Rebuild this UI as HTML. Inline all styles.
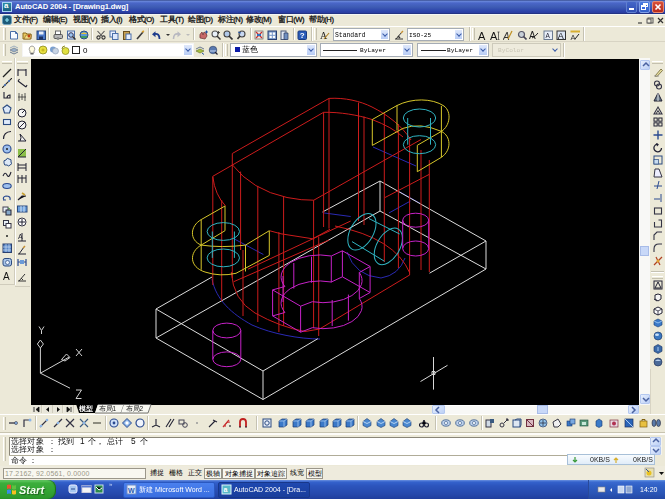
<!DOCTYPE html><html><head><meta charset="utf-8"><style>
*{box-sizing:border-box}
html,body{margin:0;padding:0}
body{width:665px;height:499px;overflow:hidden;position:relative;background:#ece9d8;font-family:"Liberation Sans",sans-serif;font-size:8px;color:#000}
.a{position:absolute;display:block}
div.a{white-space:nowrap}
.grip{position:absolute;width:3px;border-left:1px solid #fff;border-right:1px solid #c4c0ae}
.hgrip{position:absolute;height:3px;border-top:1px solid #fff;border-bottom:1px solid #c4c0ae}
.sep{position:absolute;width:2px;border-left:1px solid #c5c2b2;border-right:1px solid #fff}
.hsep{position:absolute;height:2px;border-top:1px solid #c5c2b2;border-bottom:1px solid #fff}
.combo{position:absolute;background:#fff;border:1px solid #a5acb5}
.dd{position:absolute;right:0;top:0;width:9px;bottom:0;background:linear-gradient(#dfe8fb,#b9cdf5);border:1px solid #fff}
.dd:after{content:"";position:absolute;left:2px;top:2px;width:3px;height:3px;border-right:1.3px solid #3a5ca8;border-bottom:1.3px solid #3a5ca8;transform:rotate(45deg)}
.ct{position:absolute;font-family:"Liberation Mono",monospace;font-size:8px;white-space:pre;color:#000;line-height:8px}
.sb{position:absolute;top:468px;height:11px;font-size:7px;line-height:9px;white-space:nowrap;text-align:center;color:#000}
.sbp{border:1px solid #9a968a;background:#f8f7f0}
</style></head><body><div id="root" style="position:absolute;left:0;top:0;width:665px;height:499px;overflow:hidden;filter:blur(0.3px)">
<div class="a" style="left:0;top:0;width:665px;height:14px;background:linear-gradient(#3a5090 0px,#6482d8 1.5px,#4a66c8 3px,#3e5cb4 7px,#2c44aa 11px,#2a3ca0 13px,#1a2868 14px)"></div>
<div class="a" style="left:2px;top:2px;width:10px;height:10px;background:linear-gradient(#2a8aa0,#1a6080);border:1px solid #a8d4f4"></div>
<div class="a" style="left:4px;top:2px;color:#fff;font-size:8px;line-height:8px;font-weight:bold">a</div>
<div class="a" style="left:15px;top:2px;color:#fff;font-weight:bold;font-size:7.6px;line-height:10px;letter-spacing:-0.1px">AutoCAD 2004 - [Drawing1.dwg]</div>
<div class="a" style="left:626px;top:1px;width:11px;height:12px;background:linear-gradient(#4466c8,#2f4fb4);border:1px solid #6080d0;border-radius:2px"></div>
<div class="a" style="left:629px;top:8px;width:5px;height:2px;background:#fff"></div>
<div class="a" style="left:639px;top:1px;width:11px;height:12px;background:linear-gradient(#4a7ae0,#3460c8);border:1px solid #80a0e8;border-radius:2px"></div>
<div class="a" style="left:643px;top:3px;width:5px;height:4px;border:1px solid #fff;border-top-width:2px"></div>
<div class="a" style="left:641px;top:5px;width:5px;height:5px;border:1px solid #fff;border-top-width:2px;background:#3a6ae0"></div>
<div class="a" style="left:652px;top:1px;width:12px;height:12px;background:linear-gradient(#d8503a,#b82a1c);border:1px solid #e88a70;border-radius:2px"></div>
<svg class="a" style="left:654px;top:3px" width="8" height="8" viewBox="0 0 8 8" ><path d="M1.5 1.5l5 5M6.5 1.5l-5 5" stroke="#fff" stroke-width="1.6"/></svg>
<div class="a" style="left:0;top:14px;width:665px;height:12px;background:#ece9d8;border-top:1px solid #f4f6f4"></div>
<svg class="a" style="left:2px;top:15px" width="11" height="10" viewBox="0 0 11 10" ><rect x=".5" y=".5" width="9" height="9" rx="2" fill="#1c5a78" stroke="#6aa0c0" stroke-width=".8"/><path d="M3 5h4M5 3v4" stroke="#8ae0f0" stroke-width="1.2"/></svg>
<div class="a" style="left:14px;top:15px;font-size:7.6px;line-height:10px;letter-spacing:-0.4px;-webkit-text-stroke:0.3px #222">文件(F)</div>
<div class="a" style="left:43px;top:15px;font-size:7.6px;line-height:10px;letter-spacing:-0.4px;-webkit-text-stroke:0.3px #222">编辑(E)</div>
<div class="a" style="left:73px;top:15px;font-size:7.6px;line-height:10px;letter-spacing:-0.4px;-webkit-text-stroke:0.3px #222">视图(V)</div>
<div class="a" style="left:101px;top:15px;font-size:7.6px;line-height:10px;letter-spacing:-0.4px;-webkit-text-stroke:0.3px #222">插入(I)</div>
<div class="a" style="left:129px;top:15px;font-size:7.6px;line-height:10px;letter-spacing:-0.4px;-webkit-text-stroke:0.3px #222">格式(O)</div>
<div class="a" style="left:160px;top:15px;font-size:7.6px;line-height:10px;letter-spacing:-0.4px;-webkit-text-stroke:0.3px #222">工具(T)</div>
<div class="a" style="left:188px;top:15px;font-size:7.6px;line-height:10px;letter-spacing:-0.4px;-webkit-text-stroke:0.3px #222">绘图(D)</div>
<div class="a" style="left:218px;top:15px;font-size:7.6px;line-height:10px;letter-spacing:-0.4px;-webkit-text-stroke:0.3px #222">标注(N)</div>
<div class="a" style="left:246px;top:15px;font-size:7.6px;line-height:10px;letter-spacing:-0.4px;-webkit-text-stroke:0.3px #222">修改(M)</div>
<div class="a" style="left:278px;top:15px;font-size:7.6px;line-height:10px;letter-spacing:-0.4px;-webkit-text-stroke:0.3px #222">窗口(W)</div>
<div class="a" style="left:309px;top:15px;font-size:7.6px;line-height:10px;letter-spacing:-0.4px;-webkit-text-stroke:0.3px #222">帮助(H)</div>
<svg class="a" style="left:635px;top:16px" width="30" height="9" viewBox="0 0 30 9" ><path d="M3 7h4" stroke="#444" stroke-width="1.2"/><rect x="13" y="2" width="5" height="5" fill="none" stroke="#555"/><rect x="12" y="3" width="4" height="4" fill="#eeebdd" stroke="#555"/><path d="M23 2l5 5M28 2l-5 5" stroke="#333" stroke-width="1.2"/></svg>
<div class="a" style="left:0;top:26px;width:665px;height:1px;background:#fff"></div>
<div class="a" style="left:0;top:41px;width:665px;height:1px;background:#d8d4c4"></div>
<div class="grip" style="left:3px;top:28px;height:12px"></div>
<svg class="a" style="left:9px;top:30px" width="10" height="10" viewBox="0 0 10 10" ><path d="M1.5 1.5h5l2 2v5.5h-7z" fill="#f8fbff" stroke="#4a6fa8" stroke-width="1"/><path d="M6.5 1.5v2h2" fill="none" stroke="#4a6fa8"/></svg><svg class="a" style="left:22px;top:30px" width="10" height="10" viewBox="0 0 10 10" ><path d="M1 3h3l1 1h4v5h-8z" fill="#e8c860" stroke="#8a6a20"/><path d="M2 9l2-4h6l-2 4z" fill="#f4dc88" stroke="#8a6a20" stroke-width=".7"/><circle cx="7" cy="6" r="1.5" fill="#c04010"/></svg><svg class="a" style="left:36px;top:30px" width="10" height="10" viewBox="0 0 10 10" ><rect x="1" y="1" width="8.5" height="8.5" fill="#4a78c8" stroke="#23427a"/><rect x="3" y="1.5" width="4.5" height="3" fill="#e8eef8"/><rect x="3" y="6.5" width="4" height="3" fill="#1a3060"/></svg><svg class="a" style="left:53px;top:30px" width="10" height="10" viewBox="0 0 10 10" ><rect x="2.5" y="1" width="5" height="4" fill="#fff" stroke="#666"/><rect x="1" y="4.5" width="8.5" height="4" rx="1" fill="#b8b8b8" stroke="#555"/><circle cx="5" cy="8.5" r="1.5" fill="#888"/></svg><svg class="a" style="left:66px;top:30px" width="10" height="10" viewBox="0 0 10 10" ><rect x="1.5" y="1" width="7" height="8" fill="#e8f0ff" stroke="#4a6fa8"/><circle cx="5" cy="5" r="2.3" fill="#9cc4f0" stroke="#335"/><path d="M6.5 6.5l3 3" stroke="#333" stroke-width="1.5"/></svg><svg class="a" style="left:79px;top:30px" width="10" height="10" viewBox="0 0 10 10" ><circle cx="5" cy="5" r="4" fill="#5c9ad8" stroke="#2a4a80"/><path d="M1.5 4q3.5-3 7 0" fill="#f0c030"/><path d="M2 7h6" stroke="#3a9a3a" stroke-width="1.5"/></svg><svg class="a" style="left:96px;top:30px" width="10" height="10" viewBox="0 0 10 10" ><circle cx="2.5" cy="7.5" r="1.6" fill="none" stroke="#333" stroke-width="1.1"/><circle cx="7.5" cy="7.5" r="1.6" fill="none" stroke="#333" stroke-width="1.1"/><path d="M3.5 6.5l5-5.5M6.5 6.5l-5-5.5" stroke="#555" stroke-width="1.1"/></svg><svg class="a" style="left:109px;top:30px" width="10" height="10" viewBox="0 0 10 10" ><rect x="1" y="1" width="5.5" height="6" fill="#e8f0ff" stroke="#4a6fa8"/><rect x="3.5" y="3.5" width="5.5" height="6" fill="#dce8fc" stroke="#4a6fa8"/></svg><svg class="a" style="left:122px;top:30px" width="10" height="10" viewBox="0 0 10 10" ><rect x="1.5" y="1.5" width="6" height="8" fill="#c8a050" stroke="#6a5020"/><rect x="4" y="4" width="5" height="5.5" fill="#e8f0ff" stroke="#4a6fa8"/></svg><svg class="a" style="left:135px;top:30px" width="10" height="10" viewBox="0 0 10 10" ><path d="M2 9l6-7" stroke="#3a3a3a" stroke-width="1.6"/><path d="M7 2l2-1" stroke="#d8a030" stroke-width="1.5"/></svg><svg class="a" style="left:151px;top:30px" width="10" height="10" viewBox="0 0 10 10" ><path d="M8.5 9q0-6-5-5" fill="none" stroke="#1e3c8c" stroke-width="1.8"/><path d="M1 4.2l3.5-3v6z" fill="#1e3c8c"/></svg><svg class="a" style="left:172px;top:30px" width="10" height="10" viewBox="0 0 10 10" ><path d="M1.5 9q0-6 5-5" fill="none" stroke="#b8b8c0" stroke-width="1.6"/><path d="M9 4.2l-3.5-3v6z" fill="#b8b8c0"/></svg><svg class="a" style="left:198px;top:30px" width="10" height="10" viewBox="0 0 10 10" ><path d="M2 8q-1-4 2-6l1 3 1-3q3 1 3 4l-2 3z" fill="#c86868" stroke="#6a3030" stroke-width=".7"/><path d="M7 2h3M8.5 .5v3" stroke="#2050a0" stroke-width="1"/></svg><svg class="a" style="left:211px;top:30px" width="10" height="10" viewBox="0 0 10 10" ><circle cx="4" cy="4" r="3" fill="#e8f0f8" stroke="#555" stroke-width="1.1"/><path d="M6 6l3.5 3.5" stroke="#333" stroke-width="1.5"/><path d="M7.5 1v3M6 2.5h3" stroke="#333" stroke-width=".8"/></svg><svg class="a" style="left:223px;top:30px" width="10" height="10" viewBox="0 0 10 10" ><circle cx="4" cy="4" r="3" fill="#b0c8e8" stroke="#444" stroke-width="1.1"/><path d="M6 6l3.5 3.5" stroke="#333" stroke-width="1.7"/></svg><svg class="a" style="left:237px;top:30px" width="10" height="10" viewBox="0 0 10 10" ><circle cx="5" cy="4" r="3" fill="#c8d8f0" stroke="#444" stroke-width="1.1"/><path d="M3 6l-2.5 3" stroke="#333" stroke-width="1.6"/><path d="M1 2l3 1" stroke="#2050a0"/></svg><svg class="a" style="left:254px;top:30px" width="10" height="10" viewBox="0 0 10 10" ><rect x="1" y="1" width="8" height="8" fill="#f0e8e0" stroke="#666" stroke-width=".7"/><path d="M2 2l6 6M8 2l-6 6" stroke="#c83030" stroke-width="1.2"/><rect x="3" y="4" width="4" height="2" fill="#3070c0"/></svg><svg class="a" style="left:267px;top:30px" width="10" height="10" viewBox="0 0 10 10" ><rect x="1" y="1" width="8.5" height="8.5" fill="#7898c8" stroke="#2a4070"/><rect x="2.5" y="2.5" width="2.3" height="2.3" fill="#fff"/><rect x="5.8" y="2.5" width="2.3" height="2.3" fill="#fff"/><rect x="2.5" y="5.8" width="2.3" height="2.3" fill="#fff"/><rect x="5.8" y="5.8" width="2.3" height="2.3" fill="#fff"/></svg><svg class="a" style="left:280px;top:30px" width="10" height="10" viewBox="0 0 10 10" ><rect x="1" y="1" width="5" height="8.5" fill="#e0e8f4" stroke="#4a5a78"/><path d="M4 3h4v6.5h-4z" fill="#7090c0" stroke="#2a3a60" stroke-width=".7"/></svg><svg class="a" style="left:297px;top:30px" width="10" height="10" viewBox="0 0 10 10" ><rect x="1" y="1" width="8.5" height="8.5" rx="1" fill="#2a5cb8" stroke="#1a3a80"/><text x="5.2" y="8.3" font-size="8" font-weight="bold" fill="#fff" text-anchor="middle" font-family="Liberation Sans">?</text></svg>
<svg class="a" style="left:163px;top:30px" width="10" height="10" viewBox="0 0 10 10" ><path d="M3 4h4l-2 2z" fill="#333"/></svg>
<svg class="a" style="left:183px;top:30px" width="10" height="10" viewBox="0 0 10 10" ><path d="M3 4h4l-2 2z" fill="#bbb"/></svg>
<div class="sep" style="left:48px;top:28px;height:12px"></div>
<div class="sep" style="left:91px;top:28px;height:12px"></div>
<div class="sep" style="left:148px;top:28px;height:12px"></div>
<div class="sep" style="left:193px;top:28px;height:12px"></div>
<div class="sep" style="left:250px;top:28px;height:12px"></div>
<div class="sep" style="left:293px;top:28px;height:12px"></div>
<div class="sep" style="left:311px;top:27px;height:14px"></div>
<div class="grip" style="left:314px;top:28px;height:12px"></div>
<svg class="a" style="left:320px;top:30px" width="11" height="10" viewBox="0 0 11 10" ><text x="0" y="9" font-size="10" font-family="Liberation Serif" fill="#222">A</text><path d="M4 9l5-6" stroke="#b08020" stroke-width="1.1"/></svg>
<div class="combo" style="left:333px;top:28px;width:57px;height:13px"><div class="dd"></div></div>
<div class="a" style="left:335px;top:31px;font-family:'Liberation Mono',monospace;font-size:6.4px;line-height:9px">Standard</div>
<svg class="a" style="left:394px;top:30px" width="11" height="10" viewBox="0 0 11 10" ><path d="M1 9h8M2 9l6-7" stroke="#333" stroke-width="1"/><path d="M4 6l2 2" stroke="#333" stroke-width="1.5"/><path d="M7 3l2-2" stroke="#c89030" stroke-width="1.2"/></svg>
<div class="combo" style="left:407px;top:28px;width:57px;height:13px"><div class="dd"></div></div>
<div class="a" style="left:409px;top:31px;font-family:'Liberation Mono',monospace;font-size:6.2px;line-height:9px">ISO-25</div>
<div class="sep" style="left:469px;top:27px;height:14px"></div>
<div class="grip" style="left:472px;top:28px;height:12px"></div>
<svg class="a" style="left:477px;top:30px" width="10" height="10" viewBox="0 0 10 10" ><text x="1" y="9.5" font-size="11" font-family="Liberation Sans" fill="#111">A</text></svg><svg class="a" style="left:490px;top:30px" width="10" height="10" viewBox="0 0 10 10" ><text x="0" y="9.5" font-size="11" font-family="Liberation Sans" fill="#111">A</text><path d="M8.5 2v7.5M7.5 2h2M7.5 9.5h2" stroke="#333" stroke-width=".7"/></svg><svg class="a" style="left:503px;top:30px" width="10" height="10" viewBox="0 0 10 10" ><text x="0" y="9.5" font-size="10" font-style="italic" font-family="Liberation Sans" fill="#333">A</text><path d="M5 9l4-8" stroke="#c09020" stroke-width="1.2"/></svg><svg class="a" style="left:517px;top:30px" width="10" height="10" viewBox="0 0 10 10" ><circle cx="4.5" cy="4.5" r="3" fill="#c8d0d8" stroke="#556" stroke-width="1.2"/><path d="M6.5 6.5l3 3" stroke="#445" stroke-width="1.6"/></svg><svg class="a" style="left:529px;top:30px" width="10" height="10" viewBox="0 0 10 10" ><text x="0" y="9" font-size="10" font-family="Liberation Sans" fill="#222">A</text><path d="M3 8q3-1 6-5" stroke="#222" stroke-width="1" fill="none"/></svg><svg class="a" style="left:543px;top:30px" width="10" height="10" viewBox="0 0 10 10" ><rect x="1" y="1" width="8.5" height="8.5" fill="#e8eef8" stroke="#6a7a90"/><text x="2.5" y="8.3" font-size="6.5" font-family="Liberation Sans" fill="#223">A</text></svg><svg class="a" style="left:556px;top:30px" width="10" height="10" viewBox="0 0 10 10" ><rect x="1" y="1" width="8.5" height="8.5" fill="#dde6f4" stroke="#333"/><text x="1.8" y="8.8" font-size="9" font-family="Liberation Sans" fill="#111">A</text></svg><svg class="a" style="left:570px;top:30px" width="10" height="10" viewBox="0 0 10 10" ><rect x="0.5" y="0.5" width="9.5" height="2" fill="#d8b030"/><text x="0.5" y="9.5" font-size="7.5" font-family="Liberation Sans" fill="#333">A</text><path d="M5 9l4-5" stroke="#222"/></svg>
<div class="sep" style="left:583px;top:27px;height:14px"></div>
<div class="grip" style="left:3px;top:44px;height:12px"></div>
<svg class="a" style="left:9px;top:45px" width="11" height="10" viewBox="0 0 11 10" ><path d="M1 5l4-2 4 2-4 2z" fill="#9ab0c8" stroke="#5a6a80" stroke-width=".6"/><path d="M1 7l4 2 4-2" fill="none" stroke="#6a7a90" stroke-width="1"/><path d="M1 3l4-2 4 2" fill="none" stroke="#8aa0b8" stroke-width=".8"/></svg>
<div class="combo" style="left:22px;top:43px;width:172px;height:14px;border-color:#f4f4f4"><div class="dd" style="width:10px"></div></div>
<svg class="a" style="left:27px;top:45px" width="10" height="10" viewBox="0 0 10 10" ><path d="M5 1a3 3 0 0 1 2 5v2h-4v-2a3 3 0 0 1 2-5z" fill="#fffbe0" stroke="#888" stroke-width=".8"/><rect x="3.5" y="8" width="3" height="1.5" fill="#666"/></svg><svg class="a" style="left:38px;top:45px" width="10" height="10" viewBox="0 0 10 10" ><circle cx="5" cy="5" r="4" fill="#e8e040" stroke="#8a8a20" stroke-width=".8"/><circle cx="5" cy="5" r="1.6" fill="#c8b820"/></svg><svg class="a" style="left:49px;top:45px" width="10" height="10" viewBox="0 0 10 10" ><circle cx="4" cy="4.5" r="3" fill="#7aa0d0"/><circle cx="6.5" cy="6" r="3" fill="#c8d4e4" stroke="#8898b0" stroke-width=".6"/></svg><svg class="a" style="left:60px;top:45px" width="10" height="10" viewBox="0 0 10 10" ><circle cx="5.5" cy="6" r="3.5" fill="#e0e040" stroke="#909020" stroke-width=".8"/><path d="M2 4q0-3 3-3" stroke="#909020" fill="none"/></svg><svg class="a" style="left:71px;top:45px" width="10" height="10" viewBox="0 0 10 10" ><rect x="1.5" y="1.5" width="7" height="7" fill="#fff" stroke="#222" stroke-width="1"/></svg>
<div class="a" style="left:83px;top:46px;font-size:8px;line-height:9px">0</div>
<svg class="a" style="left:195px;top:45px" width="11" height="10" viewBox="0 0 11 10" ><path d="M1 6l4-2 4 2-4 2z" fill="#a8c040" stroke="#5a6a20" stroke-width=".6"/><path d="M1 4l4-2 4 2" fill="none" stroke="#6a7a90"/><path d="M7 8l2 1.5" stroke="#2050a0"/></svg>
<svg class="a" style="left:208px;top:45px" width="11" height="10" viewBox="0 0 11 10" ><circle cx="5" cy="5" r="3.8" fill="#5a7ab0" stroke="#2a3a60" stroke-width=".6"/><path d="M2 6h6" stroke="#c8d8f0"/><path d="M7 7l2.5 2.5" stroke="#223" stroke-width="1.3"/></svg>
<div class="sep" style="left:222px;top:43px;height:14px"></div>
<div class="grip" style="left:225px;top:44px;height:12px"></div>
<div class="combo" style="left:230px;top:43px;width:87px;height:14px"><div class="dd" style="width:10px"></div></div>
<div class="a" style="left:235px;top:47px;width:5px;height:5px;background:#0a1aa8"></div>
<div class="a" style="left:242px;top:45px;font-size:7.6px;line-height:10px">蓝色</div>
<div class="combo" style="left:320px;top:43px;width:93px;height:14px"><div class="dd" style="width:10px"></div></div>
<div class="a" style="left:323px;top:50px;width:34px;height:1px;background:#222"></div>
<div class="a" style="left:360px;top:46px;font-family:'Liberation Mono',monospace;font-size:6.2px;line-height:9px">ByLayer</div>
<div class="combo" style="left:417px;top:43px;width:72px;height:14px"><div class="dd" style="width:10px"></div></div>
<div class="a" style="left:421px;top:50px;width:25px;height:1px;background:#222"></div>
<div class="a" style="left:447px;top:46px;font-family:'Liberation Mono',monospace;font-size:6.2px;line-height:9px">ByLayer</div>
<div class="combo" style="left:492px;top:43px;width:69px;height:14px;background:#eeebdd;border-color:#cdcabb"><div class="dd" style="width:10px;background:#eeebdd;border-color:#eeebdd"></div></div>
<div class="a" style="left:498px;top:46px;font-family:'Liberation Mono',monospace;font-size:6.2px;line-height:9px;color:#c8c4b4">ByColor</div>
<div class="sep" style="left:563px;top:43px;height:14px"></div>
<div class="a" style="left:31px;top:57px;width:534px;height:2px;background:#f6f4ea"></div>
<div class="a" style="left:31px;top:59px;width:608px;height:346px;background:#000"></div>
<div class="a" style="left:14px;top:58px;width:1px;height:227px;background:#d0ccbc"></div>
<div class="a" style="left:15px;top:58px;width:1px;height:227px;background:#fff"></div>
<div class="a" style="left:0px;top:284px;width:14px;height:1px;background:#d0ccbc"></div>
<div class="a" style="left:15px;top:286px;width:15px;height:1px;background:#d0ccbc"></div>
<div class="hgrip" style="left:2px;top:61px;width:10px"></div>
<div class="hgrip" style="left:17px;top:61px;width:11px"></div>
<svg class="a" style="left:2px;top:68px" width="10" height="10" viewBox="0 0 10 10" ><path d="M1 9L9 1" stroke="#222" stroke-width="1.2"/></svg>
<svg class="a" style="left:2px;top:78px" width="10" height="10" viewBox="0 0 10 10" ><path d="M0 10L10 0" stroke="#222" stroke-width="1.1"/><circle cx="3" cy="7" r="1" fill="#4a78c8"/><circle cx="7" cy="3" r="1" fill="#4a78c8"/></svg>
<svg class="a" style="left:2px;top:90px" width="10" height="10" viewBox="0 0 10 10" ><path d="M2 2v6h6v-3q-3 0-3 3" fill="none" stroke="#223" stroke-width="1.1"/></svg>
<svg class="a" style="left:2px;top:104px" width="10" height="10" viewBox="0 0 10 10" ><path d="M5 1l4 3-1.5 5h-5L1 4z" fill="#dce8f8" stroke="#2a4a80" stroke-width="1.1"/></svg>
<svg class="a" style="left:2px;top:117px" width="10" height="10" viewBox="0 0 10 10" ><rect x="1.5" y="2.5" width="7" height="5" fill="#e0ecfb" stroke="#2a4a80" stroke-width="1.1"/></svg>
<svg class="a" style="left:2px;top:130px" width="10" height="10" viewBox="0 0 10 10" ><path d="M1.5 9q0-7 7.5-7.5" fill="none" stroke="#223" stroke-width="1.2"/></svg>
<svg class="a" style="left:2px;top:144px" width="10" height="10" viewBox="0 0 10 10" ><circle cx="5" cy="5" r="4" fill="#9ec0ee" stroke="#2a4a90" stroke-width="1.1"/><circle cx="5" cy="5" r="1" fill="#222"/></svg>
<svg class="a" style="left:2px;top:157px" width="10" height="10" viewBox="0 0 10 10" ><path d="M2 6q-1-3 2-3q1-3 3-1q3 0 2 3q2 2-1 3q-1 2-3 0q-3 1-3-2z" fill="#dde8f6" stroke="#2a4a80" stroke-width="1"/></svg>
<svg class="a" style="left:2px;top:169px" width="10" height="10" viewBox="0 0 10 10" ><path d="M1 7q2-5 4-1t4-3" fill="none" stroke="#223" stroke-width="1.1"/></svg>
<svg class="a" style="left:2px;top:181px" width="10" height="10" viewBox="0 0 10 10" ><ellipse cx="5" cy="5" rx="4.2" ry="2.5" fill="#9ec0ee" stroke="#2a4a90" stroke-width="1.1"/></svg>
<svg class="a" style="left:2px;top:194px" width="10" height="10" viewBox="0 0 10 10" ><path d="M8 6q1-4-4-4q-4 1-2 4" fill="none" stroke="#2a4a90" stroke-width="1.2"/><path d="M1 6h3" stroke="#2a4a90"/></svg>
<svg class="a" style="left:2px;top:206px" width="10" height="10" viewBox="0 0 10 10" ><rect x="1" y="1" width="5" height="5" fill="#e8f0f8" stroke="#445"/><rect x="4" y="4" width="5" height="5" fill="#88aacc" stroke="#223"/><path d="M6 2l2 1" stroke="#3a8a3a"/></svg>
<svg class="a" style="left:2px;top:219px" width="10" height="10" viewBox="0 0 10 10" ><rect x="1.5" y="1.5" width="5" height="5" fill="#e8f0f8" stroke="#334"/><rect x="4" y="4.5" width="5" height="4.5" fill="#fff" stroke="#334"/></svg>
<svg class="a" style="left:2px;top:231px" width="10" height="10" viewBox="0 0 10 10" ><circle cx="5" cy="5" r="1" fill="#222"/></svg>
<svg class="a" style="left:2px;top:243px" width="10" height="10" viewBox="0 0 10 10" ><rect x="1" y="1" width="8.5" height="8.5" fill="#5a88c8" stroke="#2a4070"/><path d="M1 4h8M1 7h8M4 1v8M7 1v8" stroke="#c8dcf4" stroke-width=".7"/></svg>
<svg class="a" style="left:2px;top:257px" width="10" height="10" viewBox="0 0 10 10" ><rect x="1" y="1.5" width="8.5" height="7.5" rx="2" fill="#a8c4e8" stroke="#2a4a80"/><circle cx="5.5" cy="5.5" r="2" fill="#e8f0fb" stroke="#2a4a80" stroke-width=".7"/></svg>
<svg class="a" style="left:2px;top:270px" width="10" height="10" viewBox="0 0 10 10" ><text x="1" y="9.5" font-size="10" font-family="Liberation Sans" fill="#111">A</text></svg>
<svg class="a" style="left:17px;top:67px" width="11" height="10" viewBox="0 0 11 10" ><path d="M1 2v7M9 2v7M1 3h8" stroke="#223" stroke-width="1.1"/></svg>
<svg class="a" style="left:17px;top:78px" width="11" height="10" viewBox="0 0 11 10" ><path d="M1 3l8 6M1 3l1.5-2M9 9l1-2" stroke="#223" stroke-width="1.1"/></svg>
<svg class="a" style="left:17px;top:92px" width="11" height="10" viewBox="0 0 11 10" ><path d="M2 1v8M5 2v6M8 1v8M1 5h8" stroke="#333" stroke-width=".8"/></svg>
<svg class="a" style="left:17px;top:108px" width="11" height="10" viewBox="0 0 11 10" ><circle cx="5" cy="5" r="4" fill="#f4f4f4" stroke="#223"/><path d="M5 5l3-3" stroke="#223"/></svg>
<svg class="a" style="left:17px;top:120px" width="11" height="10" viewBox="0 0 11 10" ><circle cx="5" cy="5" r="4" fill="#f4f4f4" stroke="#223"/><path d="M2 8l6-6" stroke="#223"/></svg>
<svg class="a" style="left:17px;top:132px" width="11" height="10" viewBox="0 0 11 10" ><path d="M1 9h8L3 2q2 4 0 7" fill="#f0f0f0" stroke="#223"/></svg>
<svg class="a" style="left:17px;top:148px" width="11" height="10" viewBox="0 0 11 10" ><rect x="1" y="1" width="8" height="8" fill="#8abe48"/><path d="M1 9h8M1 9l8-8" stroke="#223"/></svg>
<svg class="a" style="left:17px;top:162px" width="11" height="10" viewBox="0 0 11 10" ><path d="M1 1v8M9 1v8M1 3h8M1 6h8" stroke="#223" stroke-width="1"/></svg>
<svg class="a" style="left:17px;top:174px" width="11" height="10" viewBox="0 0 11 10" ><path d="M1 1v8M5 1v8M9 1v8M1 4h8" stroke="#223" stroke-width="1"/></svg>
<svg class="a" style="left:17px;top:191px" width="11" height="10" viewBox="0 0 11 10" ><path d="M1 9l4-4h4" stroke="#223" stroke-width="1.1"/><path d="M5 2l3 2" stroke="#c8a030" stroke-width="1.6"/></svg>
<svg class="a" style="left:17px;top:204px" width="11" height="10" viewBox="0 0 11 10" ><rect x="0.5" y="2" width="9.5" height="6" fill="#6ca0dc" stroke="#2a4a80"/><path d="M4 2v6M7 2v6" stroke="#fff" stroke-width=".7"/></svg>
<svg class="a" style="left:17px;top:217px" width="11" height="10" viewBox="0 0 11 10" ><circle cx="5" cy="5" r="4" fill="#fff" stroke="#334"/><path d="M5 2v6M2 5h6" stroke="#223"/></svg>
<svg class="a" style="left:17px;top:232px" width="11" height="10" viewBox="0 0 11 10" ><path d="M1 9h8M5 9V1" stroke="#223"/><text x="1" y="7" font-size="7" fill="#223" font-family="Liberation Sans">A</text></svg>
<svg class="a" style="left:17px;top:245px" width="11" height="10" viewBox="0 0 11 10" ><path d="M1 9h8M2 9l5-7" stroke="#223"/><path d="M6 3l2-2" stroke="#c89030" stroke-width="1.4"/></svg>
<svg class="a" style="left:17px;top:257px" width="11" height="10" viewBox="0 0 11 10" ><path d="M1 2v7M9 2v7M1 5h8" stroke="#2a4a90" stroke-width="1.2"/><rect x="3" y="3" width="4" height="4" fill="#6a9ad8"/></svg>
<svg class="a" style="left:17px;top:272px" width="11" height="10" viewBox="0 0 11 10" ><path d="M1 9h8M2 9l6-7M4 6l2 2" stroke="#333" stroke-width="1"/></svg>
<div class="hgrip" style="left:652px;top:61px;width:11px"></div>
<svg class="a" style="left:653px;top:67px" width="10" height="10" viewBox="0 0 10 10" ><path d="M2 9l6-7 1.5 1.5-6 6.5z" fill="#e8e0a0" stroke="#6a6030" stroke-width=".8"/><path d="M1 9h5" stroke="#999"/></svg>
<svg class="a" style="left:653px;top:80px" width="10" height="10" viewBox="0 0 10 10" ><circle cx="4" cy="3.5" r="2.5" fill="none" stroke="#334" stroke-width="1.1"/><circle cx="6" cy="6.5" r="2.5" fill="none" stroke="#334" stroke-width="1.1"/></svg>
<svg class="a" style="left:653px;top:92px" width="10" height="10" viewBox="0 0 10 10" ><path d="M5 1l4 8H1z" fill="#6a7a8a" stroke="#223"/><path d="M5 1v8" stroke="#fff" stroke-width=".8"/></svg>
<svg class="a" style="left:653px;top:105px" width="10" height="10" viewBox="0 0 10 10" ><path d="M1 9l4-7 4 7z" fill="none" stroke="#334" stroke-width="1.1"/><path d="M3 9l2-3.5 2 3.5" fill="none" stroke="#334"/></svg>
<svg class="a" style="left:653px;top:117px" width="10" height="10" viewBox="0 0 10 10" ><rect x="1" y="1" width="3.2" height="3.2" fill="none" stroke="#223"/><rect x="5.8" y="1" width="3.2" height="3.2" fill="none" stroke="#223"/><rect x="1" y="5.8" width="3.2" height="3.2" fill="none" stroke="#223"/><rect x="5.8" y="5.8" width="3.2" height="3.2" fill="none" stroke="#223"/></svg>
<svg class="a" style="left:653px;top:130px" width="10" height="10" viewBox="0 0 10 10" ><path d="M5 0.5v9M0.5 5h9" stroke="#2a4a90" stroke-width="1.4"/></svg>
<svg class="a" style="left:653px;top:143px" width="10" height="10" viewBox="0 0 10 10" ><path d="M8.5 5a3.8 3.8 0 1 1-3.5-3.8" fill="none" stroke="#223" stroke-width="1.3"/><path d="M3 0l3 1.5-2 2" fill="#223"/></svg>
<svg class="a" style="left:653px;top:155px" width="10" height="10" viewBox="0 0 10 10" ><rect x="1" y="1" width="8" height="8" fill="none" stroke="#2a4a80"/><rect x="1" y="4.5" width="4.5" height="4.5" fill="#c8dcf0" stroke="#2a4a80" stroke-width=".7"/></svg>
<svg class="a" style="left:653px;top:168px" width="10" height="10" viewBox="0 0 10 10" ><path d="M1 9h8L6 1H2z" fill="#eef" stroke="#334"/></svg>
<svg class="a" style="left:653px;top:180px" width="10" height="10" viewBox="0 0 10 10" ><path d="M1 6h8M6 1l-2 8" stroke="#2a4a90" stroke-width="1"/></svg>
<svg class="a" style="left:653px;top:193px" width="10" height="10" viewBox="0 0 10 10" ><path d="M1 6h6M8 1v8" stroke="#2a4a90" stroke-width="1"/></svg>
<svg class="a" style="left:653px;top:206px" width="10" height="10" viewBox="0 0 10 10" ><rect x="1.5" y="2" width="7" height="6" fill="none" stroke="#334" stroke-width="1.1"/></svg>
<svg class="a" style="left:653px;top:218px" width="10" height="10" viewBox="0 0 10 10" ><path d="M1.5 4v5h7V2h-3" fill="none" stroke="#334" stroke-width="1.1"/></svg>
<svg class="a" style="left:653px;top:231px" width="10" height="10" viewBox="0 0 10 10" ><path d="M1 9V4l3-3h5" fill="none" stroke="#334" stroke-width="1.1"/></svg>
<svg class="a" style="left:653px;top:243px" width="10" height="10" viewBox="0 0 10 10" ><path d="M1 9V6q0-5 5-5h3" fill="none" stroke="#334" stroke-width="1.1"/></svg>
<svg class="a" style="left:653px;top:256px" width="10" height="10" viewBox="0 0 10 10" ><path d="M1 9l8-8M3 1l4 8" stroke="#b04020" stroke-width="1.2"/><circle cx="5" cy="5" r="1.5" fill="#e0a030"/></svg>
<div class="hsep" style="left:651px;top:271px;width:13px"></div>
<div class="hgrip" style="left:652px;top:276px;width:11px"></div>
<svg class="a" style="left:653px;top:280px" width="10" height="10" viewBox="0 0 10 10" ><rect x="1" y="1" width="8" height="8" fill="none" stroke="#223"/><path d="M5 2l3 6H2z" fill="none" stroke="#223"/></svg>
<svg class="a" style="left:653px;top:293px" width="10" height="10" viewBox="0 0 10 10" ><path d="M2 2l3-1 3 1v4l-3 2-3-2z" fill="#f4f4f4" stroke="#223"/><path d="M1 6l3 2" stroke="#223"/></svg>
<svg class="a" style="left:653px;top:306px" width="10" height="10" viewBox="0 0 10 10" ><path d="M5 1l4 2v4l-4 2-4-2V3z" fill="#fafafa" stroke="#223" stroke-width="1"/><path d="M1 3l4 2 4-2M5 5v4" fill="none" stroke="#223" stroke-width=".8"/></svg>
<svg class="a" style="left:653px;top:318px" width="10" height="10" viewBox="0 0 10 10" ><path d="M5 1l4 2v4l-4 2-4-2V3z" fill="#3a7ac8" stroke="#1a3a70" stroke-width=".6"/><path d="M1 3l4 2 4-2" fill="none" stroke="#a8d0f8" stroke-width=".8"/></svg>
<svg class="a" style="left:653px;top:331px" width="10" height="10" viewBox="0 0 10 10" ><circle cx="5" cy="5" r="4" fill="#3a78c0" stroke="#1a3060" stroke-width=".6"/><ellipse cx="4" cy="3.8" rx="2" ry="1.3" fill="#c8e0f8"/></svg>
<svg class="a" style="left:653px;top:344px" width="10" height="10" viewBox="0 0 10 10" ><path d="M5 .5l4 2.2v4.6L5 9.5 1 7.3V2.7z" fill="#3a6aa8" stroke="#1a3060" stroke-width=".6"/><path d="M5 3v4" stroke="#a8c8f0"/></svg>
<svg class="a" style="left:653px;top:357px" width="10" height="10" viewBox="0 0 10 10" ><circle cx="5" cy="5" r="4" fill="#4a6a98" stroke="#1a2a50" stroke-width=".6"/><path d="M2 4q3-3 6 0" fill="#b8d0ee"/></svg>
<div class="a" style="left:650px;top:369px;width:1px;height:45px;background:#d8d4c4"></div>
<div class="a" style="left:639px;top:58px;width:11px;height:347px;background:#f8f8f6"></div>
<div class="a" style="left:640px;top:60px;width:10px;height:10px;background:linear-gradient(135deg,#e6eefc,#bcd0f6);border:1px solid #b4c8f0;border-radius:1px"></div><svg class="a" style="left:640px;top:60px" width="10" height="10" viewBox="0 0 10 10" ><path d="M3 6l3-3 3 3" fill="none" stroke="#4a62a0" stroke-width="1.5"/></svg>
<div class="a" style="left:640px;top:394px;width:10px;height:10px;background:linear-gradient(135deg,#e6eefc,#bcd0f6);border:1px solid #b4c8f0;border-radius:1px"></div><svg class="a" style="left:640px;top:394px" width="10" height="10" viewBox="0 0 10 10" ><path d="M3 4l3 3 3-3" fill="none" stroke="#4a62a0" stroke-width="1.5"/></svg>
<div class="a" style="left:640px;top:246px;width:9px;height:10px;background:#c8d8f8;border:1px solid #a8bce8"></div>
<div class="a" style="left:31px;top:405px;width:608px;height:9px;background:#f8f8f6;border-top:1px solid #fff"></div>
<div class="a" style="left:31px;top:405px;width:401px;height:9px;background:#eeebdd"></div>
<div class="a" style="left:32.0px;top:405px;width:10px;height:8px;background:#e8e6da;border-right:1px solid #cfccbd"></div>
<div class="a" style="left:42.5px;top:405px;width:10px;height:8px;background:#e8e6da;border-right:1px solid #cfccbd"></div>
<div class="a" style="left:53.0px;top:405px;width:10px;height:8px;background:#e8e6da;border-right:1px solid #cfccbd"></div>
<div class="a" style="left:63.5px;top:405px;width:10px;height:8px;background:#e8e6da;border-right:1px solid #cfccbd"></div>
<svg class="a" style="left:32px;top:405px" width="42" height="9" viewBox="0 0 42 9" ><path d="M2 2v5M7 2L4 4.5 7 7z" fill="#111" stroke="#111" stroke-width=".8"/><path d="M17 2l-3 2.5 3 2.5z" fill="#111"/><path d="M25 2l3 2.5-3 2.5z" fill="#111"/><path d="M35 2l3 2.5-3 2.5zM39 2v5" fill="#111" stroke="#111" stroke-width=".8"/></svg>
<svg class="a" style="left:74px;top:404px" width="80" height="10" viewBox="0 0 80 10" ><path d="M2 0h22l-3 9H5z" fill="#000"/><path d="M24 0.5h26l-3 8.5H21" fill="#f8f8f2" stroke="#555" stroke-width=".8"/><path d="M50 0.5h27l-3 8.5H47" fill="#f8f8f2" stroke="#555" stroke-width=".8"/></svg>
<div class="a" style="left:79px;top:404px;color:#fff;font-size:7px;line-height:9px;font-weight:bold">模型</div>
<div class="a" style="left:99px;top:404px;color:#222;font-size:6.5px;line-height:9px;letter-spacing:-0.3px">布局1</div>
<div class="a" style="left:126px;top:404px;color:#222;font-size:6.5px;line-height:9px;letter-spacing:-0.3px">布局2</div>
<div class="a" style="left:432px;top:405px;width:13px;height:9px;background:linear-gradient(135deg,#e6eefc,#bcd0f6);border:1px solid #b4c8f0;border-radius:1px"></div><svg class="a" style="left:433px;top:404px" width="10" height="10" viewBox="0 0 10 10" ><path d="M6 3L3 6l3 3" fill="none" stroke="#4a62a0" stroke-width="1.5"/></svg>
<div class="a" style="left:628px;top:405px;width:11px;height:9px;background:linear-gradient(135deg,#e6eefc,#bcd0f6);border:1px solid #b4c8f0;border-radius:1px"></div><svg class="a" style="left:628px;top:404px" width="10" height="10" viewBox="0 0 10 10" ><path d="M4 3l3 3-3 3" fill="none" stroke="#4a62a0" stroke-width="1.5"/></svg>
<div class="a" style="left:537px;top:405px;width:11px;height:9px;background:#c8d8f8;border:1px solid #a8bce8"></div>
<div class="a" style="left:0;top:414px;width:665px;height:1px;background:#fff"></div>
<div class="grip" style="left:3px;top:417px;height:13px"></div>
<svg class="a" style="left:8px;top:418px" width="10" height="10" viewBox="0 0 10 10" ><path d="M1 5h6" stroke="#334" stroke-width="1.3"/><circle cx="8" cy="5" r="1.5" fill="#8ab4e8" stroke="#334" stroke-width=".6"/></svg>
<svg class="a" style="left:22px;top:418px" width="10" height="10" viewBox="0 0 10 10" ><path d="M2 9V2h6" fill="none" stroke="#334" stroke-width="1.2"/><circle cx="8" cy="2" r="1.5" fill="#8ab4e8"/></svg>
<svg class="a" style="left:39px;top:418px" width="10" height="10" viewBox="0 0 10 10" ><path d="M1 9l7-7" stroke="#334" stroke-width="1.1"/><circle cx="2" cy="8" r="1.3" fill="#8ab4e8"/><circle cx="8" cy="2" r="1.3" fill="#8ab4e8"/></svg>
<svg class="a" style="left:53px;top:418px" width="10" height="10" viewBox="0 0 10 10" ><path d="M1 9l8-8" stroke="#334" stroke-width="1.3"/><circle cx="5" cy="5" r="1.3" fill="#8ab4e8"/></svg>
<svg class="a" style="left:65px;top:418px" width="10" height="10" viewBox="0 0 10 10" ><path d="M1 1l8 8M9 1l-8 8" stroke="#334" stroke-width="1.2"/></svg>
<svg class="a" style="left:79px;top:418px" width="10" height="10" viewBox="0 0 10 10" ><path d="M1 1l8 8M9 1l-8 8" stroke="#3a5a80" stroke-width="1.1"/><circle cx="5" cy="5" r="1.2" fill="#8ab4e8"/></svg>
<svg class="a" style="left:92px;top:418px" width="10" height="10" viewBox="0 0 10 10" ><path d="M1 5h8" stroke="#5a5a50" stroke-width="1.3"/></svg>
<svg class="a" style="left:109px;top:418px" width="10" height="10" viewBox="0 0 10 10" ><circle cx="5" cy="5" r="4" fill="#cfe0f8" stroke="#2a4a90" stroke-width="1.1"/><circle cx="5" cy="5" r="1.4" fill="#2a4a90"/></svg>
<svg class="a" style="left:122px;top:418px" width="10" height="10" viewBox="0 0 10 10" ><path d="M5 .5l4.5 4.5L5 9.5.5 5z" fill="#8ab4e8" stroke="#2a4a90" stroke-width="1"/><circle cx="5" cy="5" r="1.7" fill="#fff"/></svg>
<svg class="a" style="left:135px;top:418px" width="10" height="10" viewBox="0 0 10 10" ><circle cx="5" cy="5" r="4" fill="#f0f4fc" stroke="#2a4a90" stroke-width="1.2"/></svg>
<svg class="a" style="left:151px;top:418px" width="10" height="10" viewBox="0 0 10 10" ><path d="M5 1v6M1 9l4-2 4 2" fill="none" stroke="#223" stroke-width="1.1"/></svg>
<svg class="a" style="left:165px;top:418px" width="10" height="10" viewBox="0 0 10 10" ><path d="M1 9l5-8M4 9l5-8" stroke="#223" stroke-width="1.1"/></svg>
<svg class="a" style="left:178px;top:418px" width="10" height="10" viewBox="0 0 10 10" ><rect x="1" y="2" width="5" height="4" fill="none" stroke="#445"/><circle cx="7" cy="7" r="2.3" fill="none" stroke="#445"/></svg>
<svg class="a" style="left:192px;top:418px" width="10" height="10" viewBox="0 0 10 10" ><circle cx="5" cy="5" r="1" fill="#999"/></svg>
<svg class="a" style="left:208px;top:418px" width="10" height="10" viewBox="0 0 10 10" ><path d="M1 9l6-6M5 2l4 2" stroke="#223" stroke-width="1.1"/></svg>
<svg class="a" style="left:222px;top:418px" width="10" height="10" viewBox="0 0 10 10" ><path d="M1 9l6-7" stroke="#c83030" stroke-width="1.2"/><path d="M3 9q0-5 5-5" fill="none" stroke="#c83030"/><circle cx="8" cy="8" r="1" fill="#555"/></svg>
<svg class="a" style="left:238px;top:418px" width="10" height="10" viewBox="0 0 10 10" ><path d="M2 9V4q0-3 3-3t3 3v5" fill="none" stroke="#c02020" stroke-width="1.8"/><path d="M1 9h2M7 9h2" stroke="#223"/></svg>
<svg class="a" style="left:262px;top:418px" width="10" height="10" viewBox="0 0 10 10" ><rect x="1" y="1" width="8" height="8" fill="#e8eef8" stroke="#2a4a80"/><circle cx="5" cy="5" r="2.2" fill="none" stroke="#2a4a80"/></svg>
<svg class="a" style="left:278px;top:418px" width="10" height="10" viewBox="0 0 10 10" ><path d="M1 3l3-2h5v6l-3 2H1z" fill="#3a78c8" stroke="#1a3a70" stroke-width=".7"/><path d="M1 3h5v6M6 3l3-2" fill="none" stroke="#b8d4f4" stroke-width=".7"/></svg>
<svg class="a" style="left:292px;top:418px" width="10" height="10" viewBox="0 0 10 10" ><path d="M1 3l3-2h5v6l-3 2H1z" fill="#3a78c8" stroke="#1a3a70" stroke-width=".7"/><path d="M1 3h5v6M6 3l3-2" fill="none" stroke="#b8d4f4" stroke-width=".7"/></svg>
<svg class="a" style="left:305px;top:418px" width="10" height="10" viewBox="0 0 10 10" ><path d="M1 3l3-2h5v6l-3 2H1z" fill="#3a78c8" stroke="#1a3a70" stroke-width=".7"/><path d="M1 3h5v6M6 3l3-2" fill="none" stroke="#b8d4f4" stroke-width=".7"/></svg>
<svg class="a" style="left:319px;top:418px" width="10" height="10" viewBox="0 0 10 10" ><path d="M1 3l3-2h5v6l-3 2H1z" fill="#3a78c8" stroke="#1a3a70" stroke-width=".7"/><path d="M1 3h5v6M6 3l3-2" fill="none" stroke="#b8d4f4" stroke-width=".7"/></svg>
<svg class="a" style="left:332px;top:418px" width="10" height="10" viewBox="0 0 10 10" ><path d="M1 3l3-2h5v6l-3 2H1z" fill="#3a78c8" stroke="#1a3a70" stroke-width=".7"/><path d="M1 3h5v6M6 3l3-2" fill="none" stroke="#b8d4f4" stroke-width=".7"/></svg>
<svg class="a" style="left:345px;top:418px" width="10" height="10" viewBox="0 0 10 10" ><path d="M1 3l3-2h5v6l-3 2H1z" fill="#3a78c8" stroke="#1a3a70" stroke-width=".7"/><path d="M1 3h5v6M6 3l3-2" fill="none" stroke="#b8d4f4" stroke-width=".7"/></svg>
<svg class="a" style="left:362px;top:418px" width="10" height="10" viewBox="0 0 10 10" ><path d="M5 .5l4 3v4l-4 2-4-2v-4z" fill="#4a88d0" stroke="#1a3a70" stroke-width=".6"/><path d="M1 3.5l4 2 4-2" fill="none" stroke="#d0e4f8" stroke-width=".8"/></svg>
<svg class="a" style="left:376px;top:418px" width="10" height="10" viewBox="0 0 10 10" ><path d="M5 .5l4 3v4l-4 2-4-2v-4z" fill="#4a88d0" stroke="#1a3a70" stroke-width=".6"/><path d="M1 3.5l4 2 4-2" fill="none" stroke="#d0e4f8" stroke-width=".8"/></svg>
<svg class="a" style="left:389px;top:418px" width="10" height="10" viewBox="0 0 10 10" ><path d="M5 .5l4 3v4l-4 2-4-2v-4z" fill="#4a88d0" stroke="#1a3a70" stroke-width=".6"/><path d="M1 3.5l4 2 4-2" fill="none" stroke="#d0e4f8" stroke-width=".8"/></svg>
<svg class="a" style="left:402px;top:418px" width="10" height="10" viewBox="0 0 10 10" ><path d="M5 .5l4 3v4l-4 2-4-2v-4z" fill="#4a88d0" stroke="#1a3a70" stroke-width=".6"/><path d="M1 3.5l4 2 4-2" fill="none" stroke="#d0e4f8" stroke-width=".8"/></svg>
<svg class="a" style="left:419px;top:418px" width="10" height="10" viewBox="0 0 10 10" ><circle cx="2.5" cy="7" r="2" fill="none" stroke="#223" stroke-width="1.2"/><circle cx="7.5" cy="7" r="2" fill="none" stroke="#223" stroke-width="1.2"/><path d="M3 6l2-4 2 4" stroke="#223"/></svg>
<svg class="a" style="left:441px;top:418px" width="10" height="10" viewBox="0 0 10 10" ><ellipse cx="5" cy="5" rx="4.3" ry="3.2" fill="#bcd0ea" stroke="#3a5a8a" stroke-width=".8"/><circle cx="5" cy="5" r="1.6" fill="#f0f4fa" stroke="#3a5a8a" stroke-width=".6"/></svg>
<svg class="a" style="left:455px;top:418px" width="10" height="10" viewBox="0 0 10 10" ><ellipse cx="5" cy="5" rx="4.3" ry="3.2" fill="#bcd0ea" stroke="#3a5a8a" stroke-width=".8"/><circle cx="5" cy="5" r="1.6" fill="#f0f4fa" stroke="#3a5a8a" stroke-width=".6"/></svg>
<svg class="a" style="left:469px;top:418px" width="10" height="10" viewBox="0 0 10 10" ><ellipse cx="5" cy="5" rx="4.3" ry="3.2" fill="#bcd0ea" stroke="#3a5a8a" stroke-width=".8"/><circle cx="5" cy="5" r="1.6" fill="#f0f4fa" stroke="#3a5a8a" stroke-width=".6"/></svg>
<svg class="a" style="left:485px;top:418px" width="10" height="10" viewBox="0 0 10 10" ><rect x="1" y="2" width="5" height="7" fill="#d0dae6" stroke="#334"/><rect x="5" y="1" width="4" height="4" fill="#3a5a80"/></svg>
<svg class="a" style="left:499px;top:418px" width="10" height="10" viewBox="0 0 10 10" ><circle cx="3" cy="7" r="2" fill="none" stroke="#334"/><path d="M5 5l4-4M7 1h2v2" stroke="#334"/></svg>
<svg class="a" style="left:512px;top:418px" width="10" height="10" viewBox="0 0 10 10" ><rect x="1" y="2" width="7" height="7" fill="#dde6f2" stroke="#2a4a80"/><path d="M3 2l2-1h4v6l-1 2" fill="none" stroke="#2a4a80"/></svg>
<svg class="a" style="left:525px;top:418px" width="10" height="10" viewBox="0 0 10 10" ><rect x="1.5" y="1.5" width="7" height="7" fill="#d8b8c0" stroke="#703040"/><path d="M1.5 1.5l7 7" stroke="#703040"/></svg>
<svg class="a" style="left:538px;top:418px" width="10" height="10" viewBox="0 0 10 10" ><circle cx="5" cy="5" r="4" fill="#90c0e8" stroke="#2a3a60" stroke-width=".7"/><path d="M2 5h6M5 2v6" stroke="#223" stroke-width=".7"/></svg>
<svg class="a" style="left:552px;top:418px" width="10" height="10" viewBox="0 0 10 10" ><path d="M2 9l-1-5 5-3 3 5-3 3z" fill="#f0f0f0" stroke="#223" stroke-width=".9"/></svg>
<svg class="a" style="left:566px;top:418px" width="10" height="10" viewBox="0 0 10 10" ><rect x="1" y="3" width="5" height="5" fill="#3a78c8" stroke="#1a3a70" stroke-width=".6"/><rect x="4" y="1" width="5" height="5" fill="#7aa8e0" stroke="#1a3a70" stroke-width=".6"/></svg>
<svg class="a" style="left:579px;top:418px" width="10" height="10" viewBox="0 0 10 10" ><rect x="1" y="2" width="8" height="6" fill="#5a9a7a" stroke="#1a4a3a" stroke-width=".6"/><rect x="3" y="4" width="4" height="3" fill="#c8e8d8"/></svg>
<svg class="a" style="left:594px;top:418px" width="10" height="10" viewBox="0 0 10 10" ><path d="M2 3l3-2 3 2v5l-3 1.5-3-1.5z" fill="#3a7ac8" stroke="#1a3a70" stroke-width=".6"/></svg>
<svg class="a" style="left:609px;top:418px" width="10" height="10" viewBox="0 0 10 10" ><rect x="1" y="2" width="8" height="7" fill="#e8d8e0" stroke="#803040" stroke-width=".7"/><circle cx="5" cy="5.5" r="2" fill="#b03050"/></svg>
<svg class="a" style="left:624px;top:418px" width="10" height="10" viewBox="0 0 10 10" ><rect x="1" y="1" width="8" height="8" fill="#2a64b8" stroke="#1a3060" stroke-width=".7"/><path d="M1 1l8 8" stroke="#a8c8f0"/></svg>
<svg class="a" style="left:638px;top:418px" width="10" height="10" viewBox="0 0 10 10" ><rect x="2" y="3" width="7" height="6" fill="#e8c040" stroke="#806010" stroke-width=".7"/><path d="M4 3V1.5h3V3" fill="none" stroke="#806010"/></svg>
<svg class="a" style="left:651px;top:418px" width="10" height="10" viewBox="0 0 10 10" ><ellipse cx="3" cy="5" rx="2" ry="3.5" fill="#5a7aa8" stroke="#223" stroke-width=".6"/><ellipse cx="7.5" cy="5" rx="2" ry="3.5" fill="#5a7aa8" stroke="#223" stroke-width=".6"/></svg>
<div class="sep" style="left:35px;top:416px;height:14px"></div>
<div class="sep" style="left:105px;top:416px;height:14px"></div>
<div class="sep" style="left:147px;top:416px;height:14px"></div>
<div class="sep" style="left:256px;top:416px;height:14px"></div>
<div class="sep" style="left:357px;top:416px;height:14px"></div>
<div class="sep" style="left:435px;top:416px;height:14px"></div>
<div class="sep" style="left:481px;top:416px;height:14px"></div>
<div class="a" style="left:0;top:432px;width:665px;height:1px;background:#c8c4b0"></div>
<div class="a" style="left:0;top:433px;width:665px;height:2px;background:#fdfcf8"></div>
<div class="grip" style="left:3px;top:437px;height:24px"></div>
<div class="a" style="left:9px;top:437px;width:641px;height:18px;background:#fff;border-top:1px solid #8a8678;border-left:1px solid #8a8678"></div>
<div class="a" style="left:10.5px;top:437px;font-size:8.3px;line-height:9px;letter-spacing:0.4px;color:#111">选择对象</div>
<div class="a" style="left:47.5px;top:437px;font-size:8.3px;line-height:9px;letter-spacing:0.4px;color:#111">：</div>
<div class="a" style="left:58px;top:437px;font-size:8.3px;line-height:9px;letter-spacing:0.4px;color:#111">找到</div>
<div class="a" style="left:80px;top:437px;font-size:8.3px;line-height:9px;letter-spacing:0.4px;color:#111">1</div>
<div class="a" style="left:88px;top:437px;font-size:8.3px;line-height:9px;letter-spacing:0.4px;color:#111">个</div>
<div class="a" style="left:96px;top:437px;font-size:8.3px;line-height:9px;letter-spacing:0.4px;color:#111">，</div>
<div class="a" style="left:107px;top:437px;font-size:8.3px;line-height:9px;letter-spacing:0.4px;color:#111">总计</div>
<div class="a" style="left:131px;top:437px;font-size:8.3px;line-height:9px;letter-spacing:0.4px;color:#111">5</div>
<div class="a" style="left:139.5px;top:437px;font-size:8.3px;line-height:9px;letter-spacing:0.4px;color:#111">个</div>
<div class="a" style="left:10.5px;top:444.5px;font-size:8.3px;line-height:9px;letter-spacing:0.4px;color:#111">选择对象</div>
<div class="a" style="left:47.5px;top:444.5px;font-size:8.3px;line-height:9px;letter-spacing:0.4px;color:#111">：</div>
<div class="a" style="left:9px;top:455px;width:641px;height:1px;background:#b0ac98"></div>
<div class="a" style="left:9px;top:456px;width:641px;height:9px;background:#fff"></div>
<div class="a" style="left:10.5px;top:456px;font-size:8.3px;line-height:9px;letter-spacing:0.4px;color:#111">命令</div>
<div class="a" style="left:29px;top:456px;font-size:8.3px;line-height:9px;letter-spacing:0.4px;color:#111">：</div>
<div class="a" style="left:650px;top:437px;width:12px;height:18px;background:#f4f3ec"></div>
<div class="a" style="left:650px;top:437px;width:11px;height:9px;background:linear-gradient(135deg,#e6eefc,#bcd0f6);border:1px solid #b4c8f0;border-radius:1px"></div><svg class="a" style="left:650px;top:436px" width="10" height="10" viewBox="0 0 10 10" ><path d="M3 6l3-3 3 3" fill="none" stroke="#4a62a0" stroke-width="1.5"/></svg>
<div class="a" style="left:650px;top:446px;width:11px;height:9px;background:linear-gradient(135deg,#e6eefc,#bcd0f6);border:1px solid #b4c8f0;border-radius:1px"></div><svg class="a" style="left:650px;top:445px" width="10" height="10" viewBox="0 0 10 10" ><path d="M3 4l3 3 3-3" fill="none" stroke="#4a62a0" stroke-width="1.5"/></svg>
<div class="a" style="left:567px;top:454px;width:88px;height:11px;background:linear-gradient(#f8fbfe,#e0ecf8);border:1px solid #a8c0d8"></div>
<svg class="a" style="left:571px;top:456px" width="8" height="8" viewBox="0 0 8 8" ><path d="M4 1v5M2 4l2 2 2-2" stroke="#3a9a3a" stroke-width="1.2" fill="none"/></svg>
<div class="a" style="left:590px;top:455px;font-size:7px;line-height:9px;color:#222">0KB/S</div>
<svg class="a" style="left:612px;top:456px" width="8" height="8" viewBox="0 0 8 8" ><path d="M4 7V2M2 4l2-2 2 2" stroke="#d8b030" stroke-width="1.2" fill="none"/></svg>
<div class="a" style="left:633px;top:455px;font-size:7px;line-height:9px;color:#222">0KB/S</div>
<div class="a" style="left:0;top:466px;width:665px;height:14px;background:#eeebdd"></div>
<div class="a sbp" style="left:3px;top:468px;width:143px;height:11px"></div>
<div class="a" style="left:5px;top:469px;font-size:7px;line-height:9px;color:#9a9888;letter-spacing:0.2px">17.2162, 92.0561, 0.0000</div>
<div class="a sb" style="left:148px;width:18px">捕捉</div>
<div class="a sb" style="left:167px;width:18px">栅格</div>
<div class="a sb" style="left:186px;width:18px">正交</div>
<div class="a sb sbp" style="left:204px;width:18px">极轴</div>
<div class="a sb sbp" style="left:222px;width:33px">对象捕捉</div>
<div class="a sb sbp" style="left:255px;width:32px">对象追踪</div>
<div class="a sb" style="left:288px;width:18px">线宽</div>
<div class="a sb sbp" style="left:306px;width:17px">模型</div>
<svg class="a" style="left:644px;top:467px" width="11" height="11" viewBox="0 0 11 11" ><rect x="1" y="1" width="9" height="9" fill="#e8e0b0" stroke="#888" stroke-width=".6"/><circle cx="5" cy="6" r="2.5" fill="#e8c020"/><path d="M2 2l3 3" stroke="#3050a0"/></svg>
<svg class="a" style="left:658px;top:470px" width="7" height="7" viewBox="0 0 7 7" ><path d="M1 2h5L3.5 5z" fill="#111"/></svg>
<div class="a" style="left:0;top:480px;width:665px;height:19px;background:linear-gradient(#6a90e0 0px,#3462cc 2px,#2c54bc 6px,#2649ac 14px,#203e9c 19px)"></div>
<div class="a" style="left:0;top:480px;width:56px;height:19px;background:linear-gradient(#6ad06a 0px,#3cae3c 3px,#34a634 10px,#2c962c 19px);border-radius:0 8px 8px 0;box-shadow:inset -1px 0 1px #1a6a1a"></div>
<svg class="a" style="left:6px;top:483px" width="11" height="12" viewBox="0 0 11 12" ><path d="M1 2q2-1 4 0v4q-2-1-4 0z" fill="#f05030"/><path d="M6 2q2 1 4 0v4q-2 1-4 0z" fill="#60c040"/><path d="M1 7q2-1 4 0v4q-2-1-4 0z" fill="#3a8ae8"/><path d="M6 7q2 1 4 0v4q-2 1-4 0z" fill="#f8c020"/></svg>
<div class="a" style="left:19px;top:482.5px;color:#f4fff0;font-size:11px;line-height:14px;font-weight:bold;font-style:italic;text-shadow:1px 1px 1px #206020">Start</div>
<svg class="a" style="left:68px;top:484px" width="10" height="10" viewBox="0 0 10 10" ><rect x="1" y="1" width="8" height="8" rx="2" fill="#a8c8f0" stroke="#eef"/><path d="M3 5h4" stroke="#2a4a90"/></svg>
<svg class="a" style="left:81px;top:484px" width="11" height="10" viewBox="0 0 11 10" ><rect x="1" y="1.5" width="9" height="7" fill="#f4f4f4" stroke="#ccd"/><rect x="1" y="1.5" width="9" height="2" fill="#5a7ad0"/></svg>
<svg class="a" style="left:94px;top:484px" width="10" height="10" viewBox="0 0 10 10" ><rect x="1" y="1" width="8" height="8" fill="#2a8a4a" stroke="#cde"/><path d="M2 3l3 3 3-2" stroke="#fff"/></svg>
<div class="a" style="left:109px;top:481px;color:#c8d8f8;font-size:6px">»</div>
<div class="a" style="left:123px;top:482px;width:92px;height:16px;background:linear-gradient(#4a80ee,#3a6ee0);border-radius:2px;border:1px solid #2a58c0"></div>
<svg class="a" style="left:126px;top:484px" width="11" height="11" viewBox="0 0 11 11" ><rect x="1" y="1" width="9" height="9" fill="#e8eef8" stroke="#6a8ac8"/><text x="2" y="8.5" font-size="7" font-family="Liberation Sans" fill="#2a5ab0" font-weight="bold">W</text></svg>
<div class="a" style="left:139px;top:485px;color:#fff;font-size:7px;line-height:9px">新建 Microsoft Word ...</div>
<div class="a" style="left:218px;top:482px;width:92px;height:16px;background:linear-gradient(#1e48b0,#1a3e9c);border-radius:2px;border:1px solid #17378a"></div>
<svg class="a" style="left:221px;top:484px" width="11" height="11" viewBox="0 0 11 11" ><rect x="1" y="1" width="9" height="9" fill="#58b8c8" stroke="#e0f4fa"/><text x="2.5" y="8" font-size="7" font-family="Liberation Sans" fill="#fff" font-weight="bold">a</text></svg>
<div class="a" style="left:234px;top:485px;color:#fff;font-size:7px;line-height:9px">AutoCAD 2004 - [Dra...</div>
<div class="a" style="left:588px;top:480px;width:77px;height:19px;background:linear-gradient(#6a9ae4 0px,#3a6ad0 2px,#3060c4 6px,#2a54b4 14px,#2448a4 19px);border-left:1px solid #2a4a9a"></div>
<svg class="a" style="left:597px;top:485px" width="36" height="10" viewBox="0 0 36 10" ><rect x="1" y="2" width="7" height="5" fill="#e8e8e8" stroke="#888" stroke-width=".6"/><path d="M13 5l2-2v4z" fill="#fff"/><rect x="21" y="1" width="6" height="7" fill="#c8d8f0" stroke="#fff" stroke-width=".6"/><rect x="29" y="1" width="6" height="7" fill="#90a8d0" stroke="#fff" stroke-width=".6"/></svg>
<div class="a" style="left:640px;top:485px;color:#fff;font-size:7px;line-height:9px">14:20</div>
<svg class="a" style="left:0;top:0" width="665" height="499" viewBox="0 0 665 499"><g fill="none" stroke-width="1" stroke-linejoin="round" stroke-linecap="butt">
<!-- ===== BLUE hidden (drawn first) ===== -->
<g stroke="#2a2ab4">
<path d="M212 279C216 300 232 314 252 325C272 334 300 339 320 339"/>
<path d="M347 252Q355 276 381 278Q399 275 405 258"/>
<path d="M322.9 212.8L350.7 216.5M388.9 213L410.5 201M399.7 191.9L420 203.3M373 147L416 166M234.4 239L263.4 254.5"/>
</g>
<!-- ===== WHITE BASE BOX ===== -->
<g stroke="#dcdcdc">
<path d="M156 309L212 277M322.5 212L380 181"/>
<path d="M156 309L263 371M156 309V338M156 338L263 399.5M156 338L380 211"/>
<path d="M380 181V211M380 181L486 241M380 211L486 269M486 241V269"/>
<path d="M263 371L317.8 338.7M429.5 273.2L486 241M263 371V399.5M263 399.5L486 269"/>
</g>
<!-- ===== RED HOUSING ===== -->
<g stroke="#cc1c1c">
<path d="M232.3 153.5L329 98.4M212.8 176.3L323.6 112.3"/>
<path d="M329 98.4C345 97.5 360 101 372 107C388 115 402 126 411 140"/>
<path d="M323.6 112.3C340 112 358 115 372 119.5Q392 127 403 137"/>
<path d="M232.3 164.8Q252 190 287 197.5Q302 200.5 313.8 200.2L421 139.5"/>
<path d="M212.8 176.8Q215 195 225.6 206"/>
<path d="M231.3 272Q233 300 255 313Q280 327 305 331.5L319.6 329L409.8 274.9"/>
<path d="M335 226Q395 238 409.8 273"/>
<path d="M212.8 176.3V285M221.7 200V301M232.3 153.5V278M240.6 171.6V250M243 250V316M257.8 185.9V322M278.9 232V332M283.6 196V326M313.6 200.2V328M318.7 237V336M323.6 112.3V227M329 98.4V228.6M358.5 102.6V221M364 116.5V225M384.3 113V262M398.4 124V268M409.6 137V275M421 150V270M429.3 160V272"/>
<path d="M269.8 230.8L281 233.8L312.7 238.8L330 229.3M248 269.2L350.7 221M233.7 281.7L329 240M385 197.5L429.2 174.4"/>
</g>
<!-- ===== YELLOW BOSSES ===== -->
<g stroke="#d6c62a">
<path d="M372.3 119.5L397 105.5C412 98 432 98 444 106C452 112 450 126 441.4 131.4M372.3 119.5V145.4L402.9 128.4Q420 122 441.4 131.4M397 105.5V130.5M441.4 106V157.3"/>
<path d="M441.4 131.4C451 136 452 150 441.4 157.3L417.3 171.7V145.3L441.4 131.4"/>
<path d="M225 206L201.2 219.6C190 226 189 240 201.2 245.1L225 230.7V206M201.2 219.6V269.8"/>
<path d="M201.2 245.1Q222 248 245.5 245.1M201.2 245.1C189 252 189 267 205 272Q220 277 236 273.3L269.3 255.4V230.7L245.5 245.1V271.5"/>
</g>
<!-- ===== CYAN HOLES ===== -->
<g stroke="#30b4c2">
<ellipse cx="419.5" cy="118" rx="16.2" ry="9"/>
<ellipse cx="419.5" cy="144.7" rx="16.2" ry="9"/>
<path d="M407.7 118V144.7M430.5 118V144.7"/>
<ellipse cx="223.3" cy="231.5" rx="16.2" ry="8.9"/>
<ellipse cx="223.3" cy="257.9" rx="16.2" ry="8.9"/>
<path d="M212.3 231.5V257.9M234.4 231.5V257.9"/>
<ellipse cx="361.9" cy="231.8" rx="20" ry="11.5" transform="rotate(-60 361.9 231.8)"/>
<ellipse cx="388.3" cy="246.4" rx="20" ry="11.5" transform="rotate(-60 388.3 246.4)"/>
<path d="M369 218.6L399.7 234M352 241.6L384.4 261.2"/>
</g>
<!-- ===== MAGENTA ===== -->
<g stroke="#c622c8">
<ellipse cx="226.8" cy="330.5" rx="14" ry="7.4"/>
<ellipse cx="226.8" cy="359.3" rx="14" ry="7.4"/>
<path d="M212.8 330.5V359.3M240.8 330.5V359.3"/>
<ellipse cx="415.7" cy="220.2" rx="13" ry="7"/>
<ellipse cx="415.7" cy="248.5" rx="13" ry="7.5"/>
<path d="M402.7 220.2V248.5M428.7 220.2V248.5"/>
<path d="M359.3 272.5A38.5 22 0 0 1 312.3 301.7L300.6 306.2L272.6 289.9L284.9 286.5A38.5 22 0 0 1 331.3 256L342.4 250.8L370.1 266.5Z"/>
<path d="M359.3 298.5A38.5 22 0 0 1 312.3 327.7L300.6 332.2L272.6 315.9L284.9 312.5A38.5 22 0 0 1 331.3 282L342.4 276.8L370.1 292.5Z"/>
<path d="M342.4 250.8V276.8M370.1 266.5V292.5M359.3 272.5V298.5M272.6 289.9V315.9M300.6 306.2V332.2M311.5 256.7V282.7M331.3 256.3V282.3M283 276V302M293.8 263V288.5M332.2 300V326M348.4 294.6V320.6"/>
</g>
<!-- ===== CROSSHAIR ===== -->
<g stroke="#d8d8d8">
<path d="M433.5 357V389.6M420.5 381.5L447.5 365.3"/>
<rect x="432" y="371.5" width="3" height="3"/>
</g>
<!-- ===== UCS ===== -->
<g stroke="#d0d0d0">
<path d="M40.4 373.2V348M40.4 373.2L69 357.1M40.4 373.2L70 388.2"/>
<path d="M40.4 340L43.4 344L40.4 348L37.4 344Z"/>
<path d="M61.5 359.5L66.5 354L70 357.5L65 361Z"/>
<path d="M39 326.5L41.5 330.5L44 326.5M41.5 330.5V334"/>
<path d="M76 349L82 356M82 349L76 356"/>
<path d="M76 390H81.5L76 398.5H81.5"/>
</g>
</g>
</svg>
</div></body></html>
